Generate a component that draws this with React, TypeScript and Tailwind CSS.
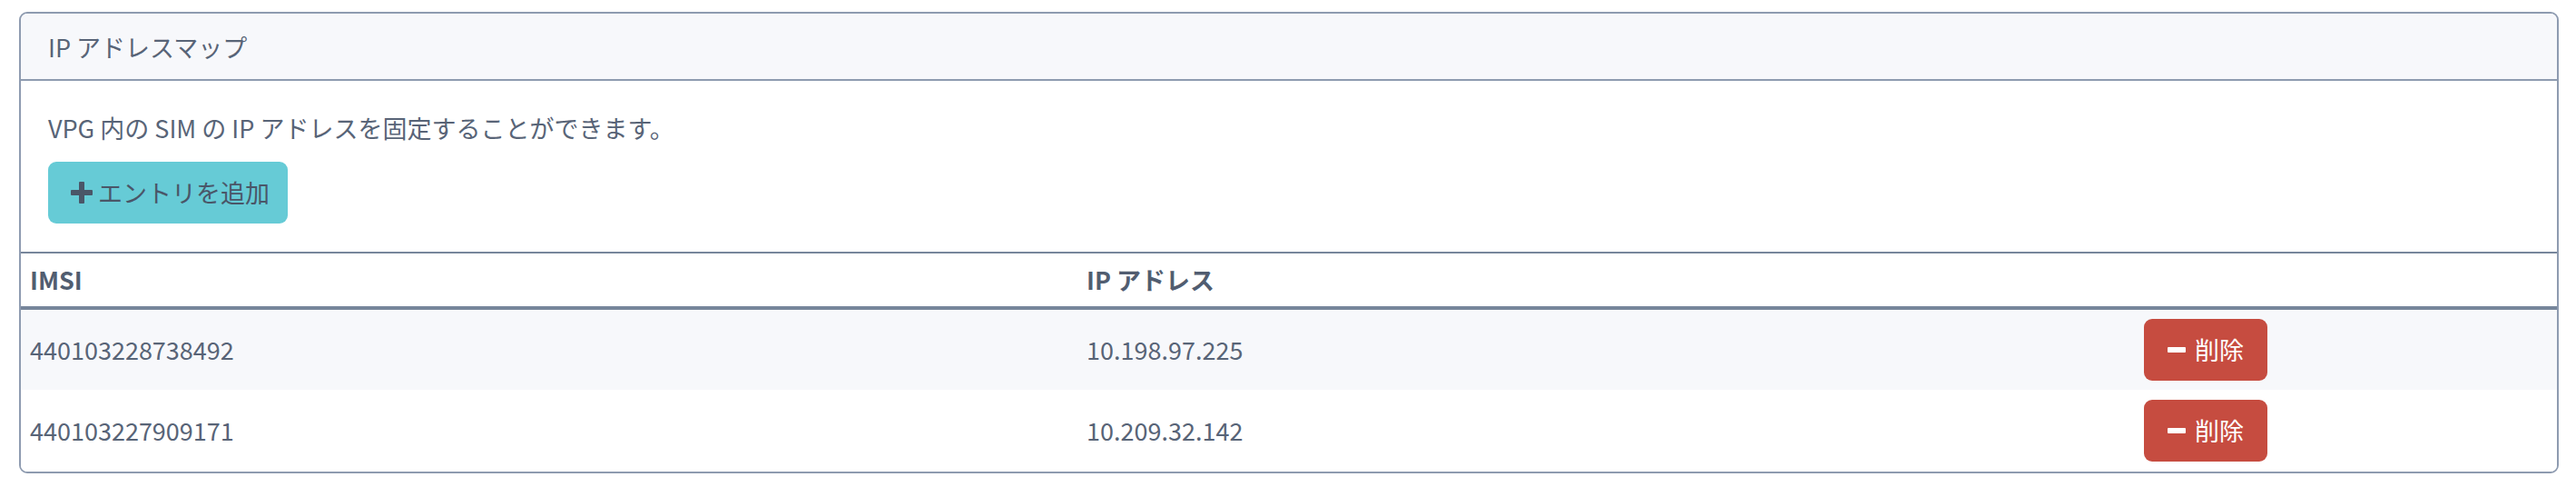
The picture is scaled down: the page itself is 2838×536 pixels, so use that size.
interface IpEntry {
    imsi: string;
    ipAddress: string;
}

const entries: IpEntry[] = [
    { imsi: '440103228738492', ipAddress: '10.198.97.225' },
    { imsi: '440103227909171', ipAddress: '10.209.32.142' },
];

// font-awesome style solid plus / minus
const PlusIcon = () => (
    <svg viewBox="0 0 24 24" className="w-[24px] h-[24px]" fill="currentColor">
        <rect x="9" y="0" width="6" height="24" rx="1" />
        <rect x="0" y="9" width="24" height="6" rx="1" />
    </svg>
);

const MinusIcon = () => (
    <svg viewBox="0 0 20 6" className="w-[20px] h-[6px]" fill="currentColor">
        <rect x="0" y="0" width="20" height="6" rx="1" />
    </svg>
);

export default function App() {
    return (
        <div className="pl-[21px] pr-[19px] pt-[13px] bg-white text-[#586477] text-[27px]" style={{ fontFamily: '"Noto Sans CJK JP", "Noto Sans", sans-serif' }}>
            <div className="border-2 border-[#8e9bb0] rounded-[9px] overflow-hidden">
                {/* Header */}
                <div className="h-[74px] flex items-center px-[30px] bg-[#f7f8fb] border-b-2 border-[#8e9bb0]">
                    <h2 className="leading-none">IP アドレスマップ</h2>
                </div>

                {/* Body */}
                <div className="pt-[32px] pb-[31px] px-[30px]">
                    <p className="leading-[40px]">VPG 内の SIM の IP アドレスを固定することができます。</p>
                    <button className="mt-[17px] h-[68px] pl-[25px] pr-[20px] flex items-center gap-[6px] rounded-[9px] bg-[#66cbd6] text-[#4a5668]">
                        <PlusIcon />
                        <span>エントリを追加</span>
                    </button>
                </div>

                {/* Table */}
                <table className="w-full table-fixed border-t-2 border-[#77869b]">
                    <colgroup>
                        <col className="w-[1164px]" />
                        <col className="w-[1164px]" />
                        <col />
                    </colgroup>
                    <thead>
                        <tr className="h-[61px] border-b-4 border-[#77869b]">
                            <th className="text-left font-bold text-[#515d70] px-[10px]">IMSI</th>
                            <th className="text-left font-bold text-[#515d70] px-[10px]">IP アドレス</th>
                            <th />
                        </tr>
                    </thead>
                    <tbody>
                        {entries.map((entry, idx) => (
                            <tr key={entry.imsi} className={idx % 2 === 0 ? 'h-[90px] bg-[#f7f8fb]' : 'h-[90px] bg-white'}>
                                <td className="px-[10px]">{entry.imsi}</td>
                                <td className="px-[10px]">{entry.ipAddress}</td>
                                <td className="px-[11px]">
                                    <button className="h-[68px] w-[136px] flex items-center justify-center gap-[10px] rounded-[9px] bg-[#c64c40] text-white">
                                        <MinusIcon />
                                        <span>削除</span>
                                    </button>
                                </td>
                            </tr>
                        ))}
                    </tbody>
                </table>
            </div>
        </div>
    );
}
